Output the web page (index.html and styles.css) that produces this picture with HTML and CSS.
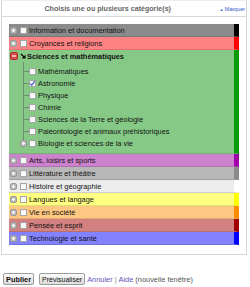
FILE: index.html
```html
<!DOCTYPE html>
<html lang="fr">

<head>
    <meta charset="UTF-8">
    <title>Catégories</title>
    <link rel="stylesheet" href="styles.css">
</head>

<body>
    <div class="panel">
        <div class="panel-head">
            <span class="title">Choisis une ou plusieurs catégorie(s)</span>
            <a class="toggle" href="#"><span class="tri">&#9650;</span> Masquer</a>
        </div>
        <div class="panel-body">
            <div class="cat c-info">
                <svg class="exp" viewBox="0 0 7 7"><rect x="0.5" y="0.5" width="6" height="6" rx="1.5"/><path d="M2 3.5h3M3.5 2v3"/></svg>
                <span class="box"></span>
                <span class="label">Information et documentation</span>
            </div>
            <div class="cat c-croy">
                <svg class="exp" viewBox="0 0 7 7"><rect x="0.5" y="0.5" width="6" height="6" rx="1.5"/><path d="M2 3.5h3M3.5 2v3"/></svg>
                <span class="box"></span>
                <span class="label">Croyances et religions</span>
            </div>
            <div class="cat-open c-sci">
                <div class="cat-head">
                    <svg class="exp open" viewBox="0 0 8 8"><rect x="0.5" y="0.5" width="7" height="7" rx="1.5"/><path d="M2 4h4"/></svg>
                    <svg class="arrow" viewBox="0 0 6 6"><path d="M1 1l3.6 3.6"/><path class="tip" d="M5.5 1.8v3.7h-3.7z"/></svg>
                    <span class="label strong">Sciences et mathématiques</span>
                </div>
                <ul class="tree">
                    <li><span class="box"></span>Mathématiques</li>
                    <li><span class="box checked"><svg viewBox="0 0 7 7"><path d="M1.3 3.6l1.5 1.6 3-4"/></svg></span>Astronomie</li>
                    <li><span class="box"></span>Physique</li>
                    <li><span class="box"></span>Chimie</li>
                    <li><span class="box"></span>Sciences de la Terre et géologie</li>
                    <li><span class="box"></span>Paléontologie et animaux préhistoriques</li>
                    <li class="has-sub">
                        <svg class="exp" viewBox="0 0 7 7"><rect x="0.5" y="0.5" width="6" height="6" rx="1.5"/><path d="M2 3.5h3M3.5 2v3"/></svg>
                        <span class="box"></span>Biologie et sciences de la vie
                    </li>
                </ul>
            </div>
            <div class="cat c-arts">
                <svg class="exp" viewBox="0 0 7 7"><rect x="0.5" y="0.5" width="6" height="6" rx="1.5"/><path d="M2 3.5h3M3.5 2v3"/></svg>
                <span class="box"></span>
                <span class="label">Arts, loisirs et sports</span>
            </div>
            <div class="cat c-lit">
                <svg class="exp" viewBox="0 0 7 7"><rect x="0.5" y="0.5" width="6" height="6" rx="1.5"/><path d="M2 3.5h3M3.5 2v3"/></svg>
                <span class="box"></span>
                <span class="label">Littérature et théâtre</span>
            </div>
            <div class="cat c-hist">
                <svg class="exp" viewBox="0 0 7 7"><rect x="0.5" y="0.5" width="6" height="6" rx="1.5"/><path d="M2 3.5h3M3.5 2v3"/></svg>
                <span class="box"></span>
                <span class="label">Histoire et géographie</span>
            </div>
            <div class="cat c-lang">
                <svg class="exp" viewBox="0 0 7 7"><rect x="0.5" y="0.5" width="6" height="6" rx="1.5"/><path d="M2 3.5h3M3.5 2v3"/></svg>
                <span class="box"></span>
                <span class="label">Langues et langage</span>
            </div>
            <div class="cat c-vie">
                <svg class="exp" viewBox="0 0 7 7"><rect x="0.5" y="0.5" width="6" height="6" rx="1.5"/><path d="M2 3.5h3M3.5 2v3"/></svg>
                <span class="box"></span>
                <span class="label">Vie en société</span>
            </div>
            <div class="cat c-pens">
                <svg class="exp" viewBox="0 0 7 7"><rect x="0.5" y="0.5" width="6" height="6" rx="1.5"/><path d="M2 3.5h3M3.5 2v3"/></svg>
                <span class="box"></span>
                <span class="label">Pensée et esprit</span>
            </div>
            <div class="cat c-tech">
                <svg class="exp" viewBox="0 0 7 7"><rect x="0.5" y="0.5" width="6" height="6" rx="1.5"/><path d="M2 3.5h3M3.5 2v3"/></svg>
                <span class="box"></span>
                <span class="label">Technologie et santé</span>
            </div>
        </div>
    </div>

    <div class="actions">
        <button class="btn main">Publier</button>
        <button class="btn">Prévisualiser</button>
        <a class="link" href="#">Annuler</a>
        <span class="sep">|</span>
        <a class="link" href="#">Aide</a>
        <span class="note">(nouvelle fenêtre)</span>
    </div>
</body>

</html>
```

FILE: styles.css
```css
body {
    font-family: "Liberation Sans", Arial, sans-serif;
    font-size: 7.4px;
    color: #111;
    background-color: #fff;
    margin: 0;
    padding: 0 3px 0 1px;
}

.panel {
    border: 1px solid #d4d4d4;
    border-top-color: #eee;
}

.panel-head {
    display: flex;
    align-items: center;
    height: 15px;
    border-bottom: 1px solid #d8d8d8;
}

.title {
    flex: 1;
    text-align: center;
    font-size: 7.1px;
    font-weight: bold;
    color: #666;
    padding-right: 6px;
}

.toggle {
    color: #3355cc;
    font-size: 5.2px;
    text-decoration: none;
    padding-right: 1px;
}

.tri {
    font-size: 4px;
}

.panel-body {
    padding: 7px 7px 9px 7px;
}

/* rangées de catégories */
.cat,
.cat-head {
    display: flex;
    align-items: center;
    height: 12px;
}

.cat,
.cat-open {
    border-right: 5px solid #000;
    border-bottom: 1px solid rgba(0, 0, 0, 0.13);
}

.exp {
    width: 7px;
    height: 7px;
    margin-left: 1px;
    margin-right: 3px;
    flex: none;
}

.exp rect {
    fill: #b9b9b9;
    stroke: #9a9a9a;
    stroke-width: 1;
}

.exp path {
    stroke: #fff;
    stroke-width: 1.2;
}

.exp.open {
    width: 8px;
    height: 8px;
    margin-right: 2px;
}

.exp.open rect {
    fill: #d94a4a;
    stroke: #b03030;
}

.arrow {
    width: 6px;
    height: 6px;
    margin-right: 1px;
    flex: none;
}

.arrow path {
    stroke: #000;
    stroke-width: 1.3;
    fill: none;
}

.arrow .tip {
    fill: #000;
    stroke: none;
}

.box {
    display: inline-block;
    box-sizing: border-box;
    width: 7px;
    height: 7px;
    border: 1px solid #a5a5a5;
    background: linear-gradient(#f4f4f4, #fff);
    margin-right: 2px;
    flex: none;
    position: relative;
}

.box svg {
    position: absolute;
    left: -1px;
    top: -1px;
    width: 7px;
    height: 7px;
}

.box svg path {
    stroke: #2c50b8;
    stroke-width: 1.1;
    fill: none;
}

.strong {
    font-weight: bold;
}

/* arbre des sous-catégories */
.tree {
    list-style: none;
    margin: 0;
    padding: 3px 0 4px 0;
    position: relative;
}

.tree::before {
    content: "";
    position: absolute;
    left: 14px;
    top: 0;
    height: 81px;
    border-left: 1px solid #6f8f6f;
}

.tree li {
    display: flex;
    align-items: center;
    height: 12px;
    padding-left: 20px;
    position: relative;
}

.tree li::before {
    content: "";
    position: absolute;
    left: 14px;
    top: 6px;
    width: 6px;
    border-top: 1px solid #6f8f6f;
}

.tree li.has-sub {
    padding-left: 11px;
}

.tree li.has-sub .exp {
    margin: 0 2px 0 0;
    position: relative;
    z-index: 1;
}

.tree li.has-sub::before {
    display: none;
}

/* couleurs */
.c-info { background-color: #8a8a8a; border-right-color: #000; }
.c-croy { background-color: #ff8282; border-right-color: #f00; }
.c-sci { background-color: #86c986; border-right-color: #0a9a0a; }
.c-arts { background-color: #cd82cd; border-right-color: #a000a8; }
.c-lit { background-color: #b8b8b8; border-right-color: #8a8a8a; }
.c-hist { background-color: #ececec; border-right-color: #fff; }
.c-lang { background-color: #ffff82; border-right-color: #ff0; }
.c-vie { background-color: #ffc882; border-right-color: #ff8c00; }
.c-pens { background-color: #d28080; border-right-color: #a00000; }
.c-tech { background-color: #8282ff; border-right-color: #00f; }

/* boutons */
.actions {
    display: flex;
    align-items: center;
    margin-top: 18px;
    padding-left: 2px;
}

.btn {
    font-family: "Liberation Sans", Arial, sans-serif;
    font-size: 7px;
    height: 12px;
    padding: 0 2px;
    margin-right: 5px;
    border: 1px solid #9c9c9c;
    border-radius: 2px;
    background: linear-gradient(#fbfbfb, #dcdcdc);
    color: #111;
}

.btn.main {
    font-weight: bold;
    font-size: 7.4px;
}

.btn + .btn {
    margin-right: 2px;
}

.link {
    color: #6b4fb8;
    text-decoration: none;
}

.sep {
    color: #888;
    margin: 0 2px;
}

.note {
    color: #555;
    margin-left: 2px;
}
```
